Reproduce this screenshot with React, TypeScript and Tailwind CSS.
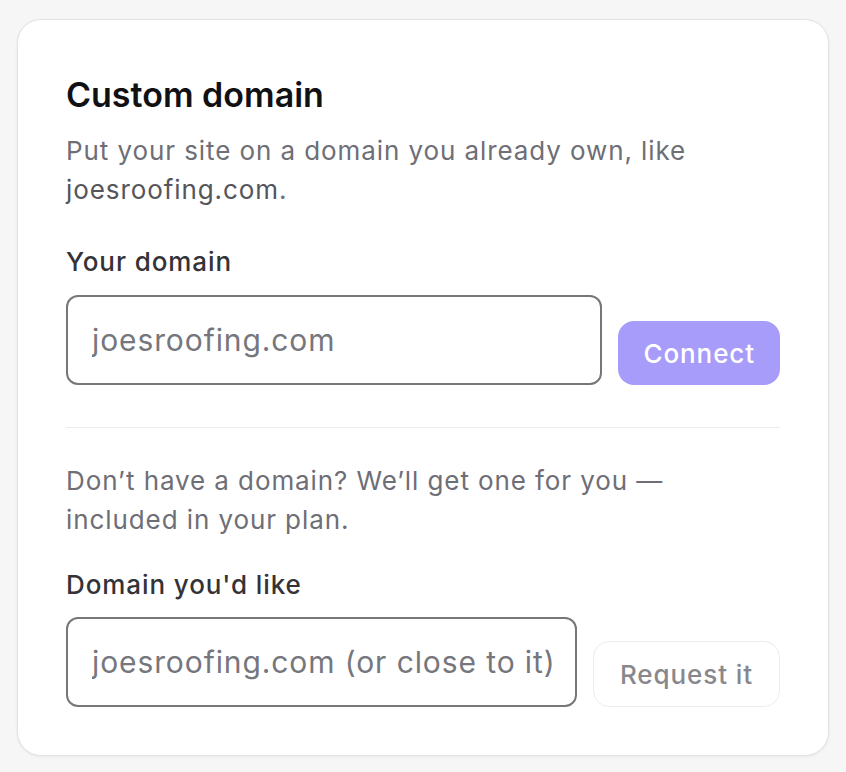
import React from "react";

const font = { fontFamily: "Inter, 'Noto Sans', sans-serif" };

function DomainRow({
  placeholder,
  action,
  primary,
}: {
  placeholder: string;
  action: string;
  primary?: boolean;
}) {
  return (
    <div className="flex items-end gap-4">
      <input
        type="text"
        placeholder={placeholder}
        className="h-[90px] min-w-0 flex-1 rounded-[12px] border-2 border-[#77777a] bg-white pl-[24px] pr-[10px] text-[30px] tracking-[0.03em] text-[#333] outline-none placeholder:text-[#76767d]"
      />
      {primary ? (
        <button className="h-[64px] shrink-0 rounded-[16px] bg-[#a79cf9] px-[25px] text-[26px] font-medium tracking-[0.035em] text-white">
          {action}
        </button>
      ) : (
        <button className="h-[66px] shrink-0 rounded-[16px] border border-[#ececec] bg-white px-[26px] text-[26px] font-medium tracking-[0.035em] text-[#88888c]">
          {action}
        </button>
      )}
    </div>
  );
}

export default function App() {
  return (
    <div className="min-h-screen bg-[#f6f6f6] px-[17px] pt-[19px] pb-[16px]" style={font}>
      <section className="rounded-[24px] border border-[#e2e2e2] bg-white px-12 pt-[54px] pb-12 shadow-[0_1px_3px_rgba(0,0,0,0.06)]">
        <h2 className="text-[34px] leading-[42px] font-semibold text-[#111114]">Custom domain</h2>
        <p className="mt-[15px] max-w-[640px] text-[26px] leading-[39px] tracking-[0.035em] text-[#6e6e76]">
          Put your site on a domain you already own, like{" "}
          <span className="text-[#55555c]">joesroofing.com</span>.
        </p>

        <label className="mt-[33px] mb-[14px] block text-[26px] leading-[39px] font-medium tracking-[0.035em] text-[#333338]">
          Your domain
        </label>
        <DomainRow placeholder="joesroofing.com" action="Connect" primary />

        <div className="mt-[42px] h-px bg-[#ededed]" />

        <p className="mt-[33px] max-w-[640px] text-[26px] leading-[39px] tracking-[0.035em] text-[#6e6e76]">
          Don’t have a domain? We’ll get one for you — included in your plan.
        </p>

        <label className="mt-[26px] mb-[13px] block text-[26px] leading-[39px] font-medium tracking-[0.035em] text-[#333338]">
          Domain you'd like
        </label>
        <DomainRow placeholder="joesroofing.com (or close to it)" action="Request it" />
      </section>
    </div>
  );
}
